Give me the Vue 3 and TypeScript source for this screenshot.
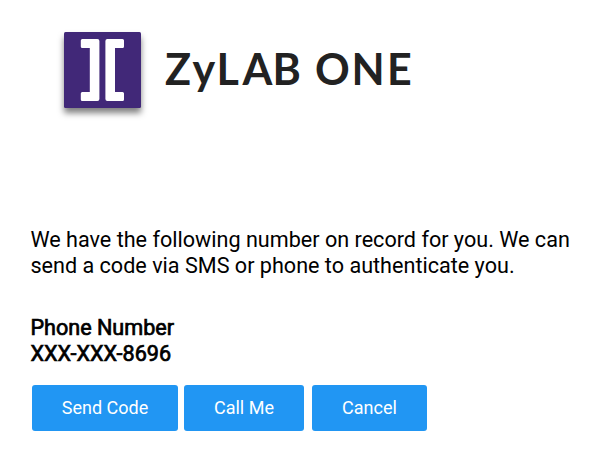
<script setup lang="ts">
const phone: string = 'XXX-XXX-8696'
const actions: { id: string; label: string }[] = [
  { id: 'send', label: 'Send Code' },
  { id: 'call', label: 'Call Me' },
  { id: 'cancel', label: 'Cancel' },
]
</script>

<template>
  <main class="page">
    <header class="brand">
      <svg class="mark" viewBox="0 0 77 76" aria-hidden="true">
        <rect width="77" height="76" rx="1.5" fill="#412878" />
        <path fill="#fff" d="M18.3 7H33.4Q35.4 7 35.4 9V67Q35.4 69 33.4 69H18.3Q16.8 69 16.8 67.5V61.5Q16.8 60 18.3 60H25.8V16H18.3Q16.8 16 16.8 14.5V8.5Q16.8 7 18.3 7Z" />
        <path fill="#fff" d="M58.5 7H43.4Q41.4 7 41.4 9V67Q41.4 69 43.4 69H58.5Q60 69 60 67.5V61.5Q60 60 58.5 60H51V16H58.5Q60 16 60 14.5V8.5Q60 7 58.5 7Z" />
      </svg>
      <svg class="name" viewBox="0 0 260 60">
        <text x="0 27.5 51.5 77.5 107.5 136 150 186.5 222" y="42.8">ZyLAB ONE</text>
      </svg>
    </header>
    <p class="message">We have the following number on record for you. We can<br />send a code via SMS or phone to authenticate you.</p>
    <section class="phone">
      <div><span>Phone Number</span></div>
      <div><span>{{ phone }}</span></div>
    </section>
    <div class="actions">
      <button v-for="a in actions" :key="a.id" type="button" class="btn" :class="a.id">{{ a.label }}</button>
    </div>
  </main>
</template>

<style>
body {
  background: #fff;
}
</style>

<style scoped>
.page {
  box-sizing: border-box;
  width: 605px;
  height: 456px;
  padding: 32px 0 0 30.4px;
  overflow: hidden;
  color: #000;
  font-family: Roboto, "Liberation Sans", sans-serif;
}
.brand {
  display: flex;
  height: 195px;
  padding-left: 33.6px;
}
.mark {
  width: 77px;
  height: 76px;
  overflow: visible;
  filter: drop-shadow(0 5px 3px rgba(0, 0, 0, 0.5));
}
.name {
  width: 260px;
  height: 60px;
  margin: 10px 0 0 24px;
}
.name text {
  font: 700 43px Lato, sans-serif;
  fill: #222;
}
.message {
  margin: 0;
  font-size: 21.6px;
  line-height: 26px;
  white-space: nowrap;
}
.phone {
  margin-top: 36px;
  font-size: 21.6px;
  line-height: 26px;
  -webkit-text-stroke: 0.7px #000;
}
.actions {
  display: flex;
  margin: 18px 0 0 1.6px;
}
.btn {
  height: 46px;
  padding: 0 0 2px;
  border: 0;
  border-radius: 3px;
  background: #2196f3;
  color: #fff;
  font: 400 18px Roboto, sans-serif;
}
.send {
  width: 146px;
}
.call {
  width: 120px;
  margin-left: 6px;
}
.cancel {
  width: 115px;
  margin-left: 8px;
}
</style>
